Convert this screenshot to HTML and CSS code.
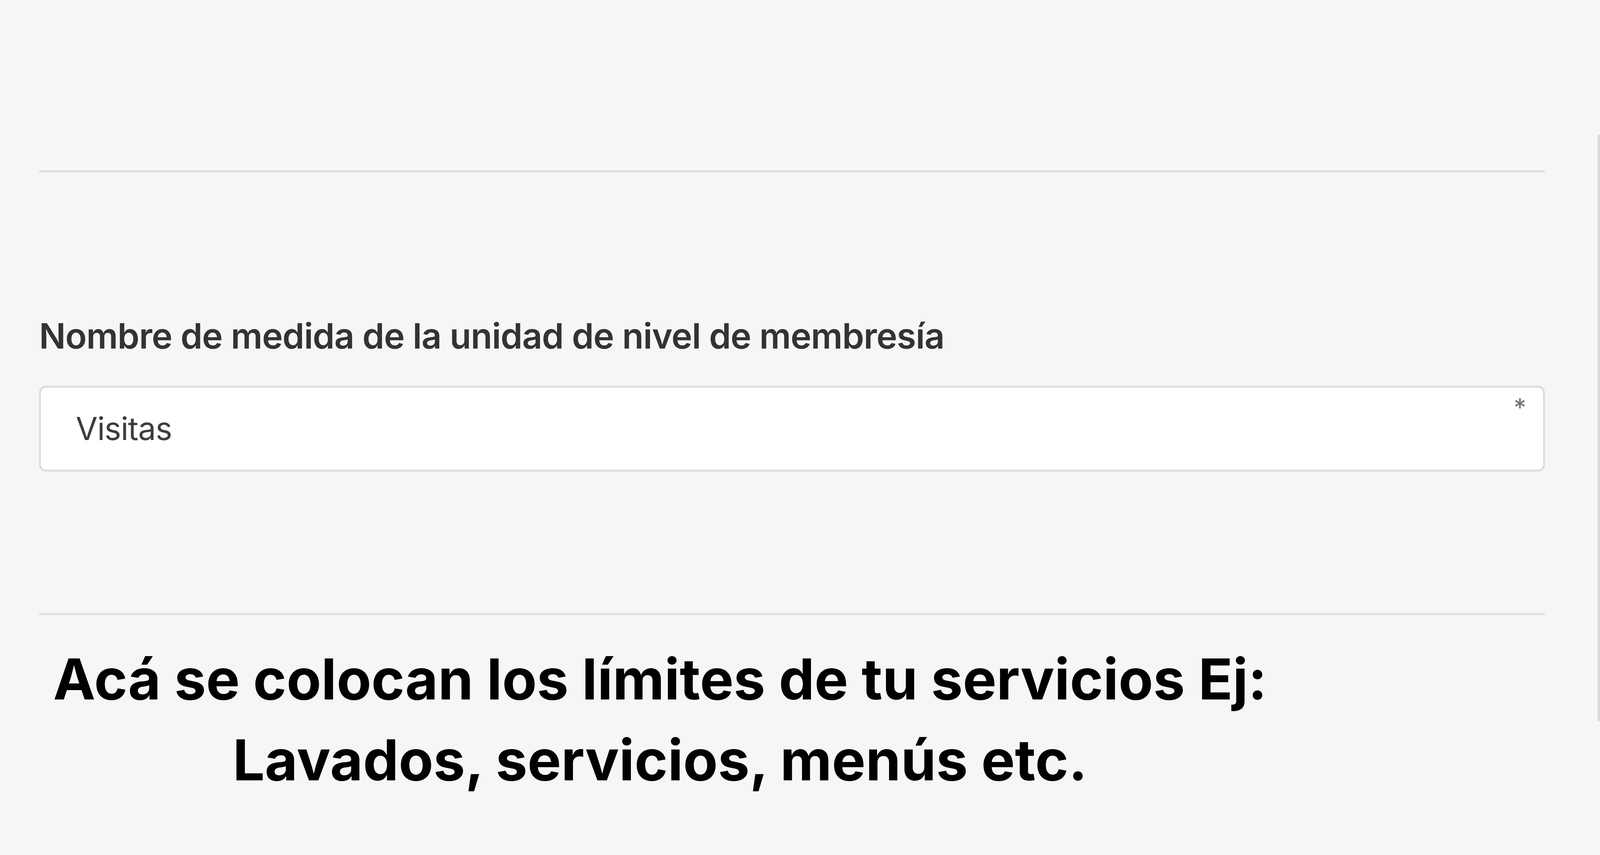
FILE: index.html
```html
<!DOCTYPE html>
<html lang="es">
<head>
  <meta charset="UTF-8">
  <meta name="viewport" content="width=device-width, initial-scale=1.0">
  <title>Nivel de membresía</title>
  <link rel="stylesheet" href="styles.css">
</head>
<body>
  <div class="page">
    <main class="content">
      <hr class="divider divider-top">

      <div class="form-group">
        <label class="form-label" for="unit-name">Nombre de medida de la unidad de nivel de membresía</label>
        <div class="field">
          <span class="field-value" id="unit-name">Visitas</span>
          <span class="required">*</span>
        </div>
      </div>

      <hr class="divider divider-bottom">

      <div class="note">
        Acá se colocan los límites de tu servicios Ej:<br>
        Lavados, servicios, menús etc.
      </div>
    </main>
    <div class="rail"></div>
  </div>
</body>
</html>
```

FILE: styles.css
```css
body, html {
  margin: 0; padding: 0;
  background-color: #f6f6f6;
  font-family: 'Inter', 'Noto Sans', sans-serif;
  color: #333;
  overflow: hidden;
}
.page {
  display: flex;
  width: 100vw; height: 100vh;
}
.content {
  flex: 1;
  padding: 436px 135px 0 100px;
}
.divider {
  margin: 0;
  border: none;
  height: 5px;
  background: #dcdce2;
}
.form-group {
  margin-top: 365px;
}
.form-label {
  display: block;
  font-size: 90px;
  line-height: 108px;
  font-weight: 600;
  letter-spacing: -1.1px;
  color: #333;
}
.field {
  position: relative;
  margin-top: 73px;
  height: 220px;
  box-sizing: border-box;
  border: 5px solid #dcdce3;
  border-radius: 18px;
  background: #fff;
  padding-left: 89px;
  display: flex;
  align-items: center;
}
.field-value {
  font-size: 81px;
  letter-spacing: -1px;
  color: #3c3c3c;
}
.required {
  position: absolute;
  top: 12px; right: 43px;
  font-size: 64px;
  color: #707070;
}
.divider-bottom {
  margin-top: 362px;
}
.note {
  display: inline-block;
  margin: 60px 0 0 36px;
  font-size: 145px;
  line-height: 207px;
  font-weight: 700;
  color: #000;
  text-align: center;
}
.rail {
  width: 6px;
  height: 1500px;
  margin-top: 345px;
  background: #d8d8de;
}
```
